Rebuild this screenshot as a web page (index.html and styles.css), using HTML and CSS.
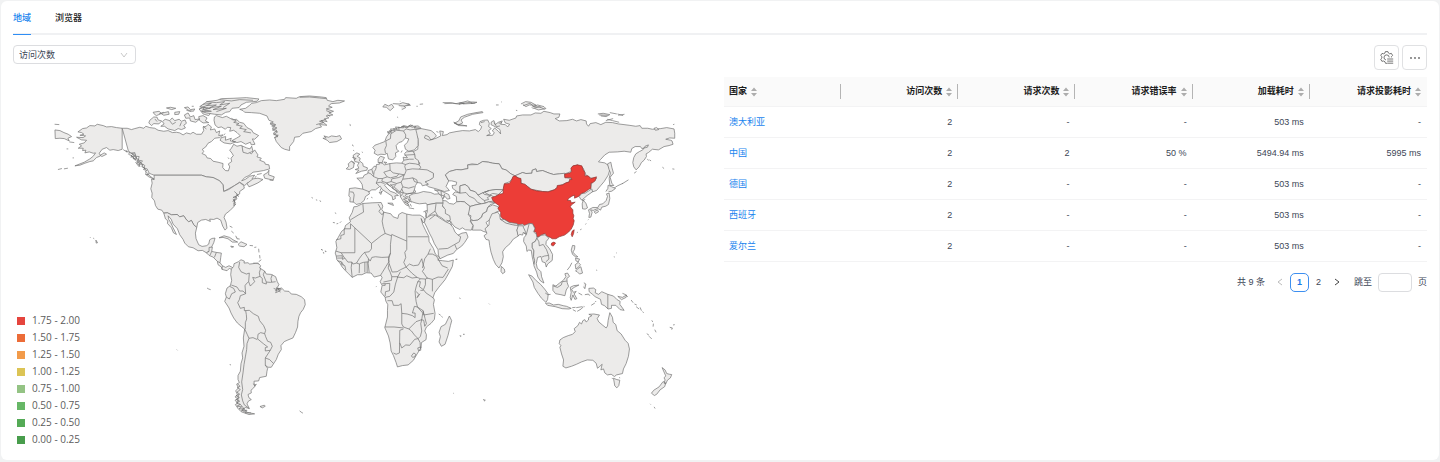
FILE: index.html
```html
<!DOCTYPE html>
<html lang="zh-CN">
<head>
<meta charset="utf-8">
<title>访问统计</title>
<link rel="stylesheet" href="styles.css">
</head>
<body>
<svg class="defs" width="0" height="0" aria-hidden="true">
  <symbol id="sort" viewBox="0 0 6 10"><path d="M3 .4 6 4H0zM3 9.6 6 6H0z" fill="#adadad"/></symbol>
</svg>
<main class="card">
  <nav class="tabs">
    <a class="tab active" href="#region">地域</a>
    <a class="tab" href="#browser">浏览器</a>
  </nav>
  <div class="toolbar">
    <label class="picker">
      <select aria-label="指标"><option>访问次数</option></select>
      <svg viewBox="0 0 8 6"><path d="M1 1l3 4 3-4" fill="none" stroke="#bbb" stroke-width=".8"/></svg>
    </label>
    <div class="actions">
      <button class="icon-btn" aria-label="设置">
        <svg viewBox="0 0 14 14" fill="none" stroke="#666" stroke-width=".9"><path d="M7 12.3H5.5L5 10.8 3.6 10l-1.7.3L.7 8.2 1.9 7V5.6L.7 4.5 2 2.4l1.6.4L5 2 5.4.6h2.5L8.4 2l1.3.8 1.7-.4 1.2 2.1-1.2 1.1v.8M6 9a2.6 2.6 0 1 1 3.2-2.6M7.2 8h6M7.2 10.1h6M7.2 12.2h6"/></svg>
      </button>
      <button class="icon-btn" aria-label="更多">
        <svg viewBox="0 0 14 14" fill="#666"><circle cx="3" cy="7" r=".9"/><circle cx="7" cy="7" r=".9"/><circle cx="11" cy="7" r=".9"/></svg>
      </button>
    </div>
  </div>
  <div class="content">
    <section class="map">
      <svg class="world" viewBox="13 77 704 374" role="img" aria-label="世界地图">
        <!-- North America -->
        <g transform="translate(40 85) scale(.33333)">
          <path d="M247 130 230 128 215 125 200 126 190 122 172 118 165 123 150 122 140 129 128 131 114 141 125 143 132 148 120 151 137 153 130 158 110 157 125 165 140 166 133 174 118 178 125 183 115 190 130 190 128 197 138 196 135 204 148 201 160 205 167 204 160 214 150 222 133 232 105 243 120 241 135 235 150 230 160 228 170 218 182 213 178 205 187 193 200 188 210 196 220 194 235 197 247 193z"/>
          <path d="M247 130 262 130 275 134 285 131 300 127 312 130 318 124 330 128 345 130 355 136 372 139 385 137 398 143 410 142 420 144 430 150 440 144 452 147 460 142 470 148 485 148 492 137 490 126 500 124 505 118 515 126 512 135 525 132 530 143 540 138 537 152 550 150 540 158 525 160 515 170 505 175 498 186 488 193 492 200 487 206 498 211 502 219 513 221 520 229 535 232 550 236 549 248 557 257 566 258 570 246 566 237 576 230 574 220 581 212 577 205 570 196 575 190 582 178 592 184 605 181 612 190 610 197 625 200 635 207 645 195 655 210 652 216 665 220 660 226 675 232 677 238 688 240 690 252 672 257 655 260 640 262 628 272 615 278 606 288 618 283 630 274 645 271 637 282 650 288 640 296 625 293 615 302 600 292 585 302 552 320 550 300 540 288 520 278 500 276 485 271H343L335 268 328 265 322 252 312 250 315 242 303 235 308 228 295 226 298 215 287 214 285 203 272 205 265 196z"/>
          <path d="M343 271H485L500 276 520 278 540 288 550 300 552 320 567 314 585 302 600 293 612 302 614 310 600 320 600 327 588 334 592 342 583 348 588 357 582 366 570 378 557 388 553 398 559 412 562 430 556 436 549 424 543 406 532 400 522 404 510 403 512 410 498 404 485 406 474 413 471 428 462 420 455 407 447 411 440 405 432 393 420 396 412 389 395 390 383 384 372 385 366 376 354 373 347 362 344 348 336 338 337 325 333 312 337 295 335 283 343 284z"/>
          <path d="M372 385 383 384 395 390 412 389 420 396 432 393 440 405 447 411 455 407 462 420 471 428 467 445 469 462 477 480 487 485 500 483 507 478 510 465 517 461 526 460 522 474 517 484 514 490 508 500 500 504 488 497 475 498 460 489 446 486 435 475 430 464 420 450 413 432 400 418 394 403 385 393 387 404 394 415 399 427 410 449 401 444 395 429 383 416 384 408 377 402z"/>
          <path d="M500 504 508 500V488L518 487 516 500 530 503 545 505 543 519 541 534 548 543 558 548 568 543 580 549 577 557 570 550 562 558 547 554 545 547 535 540 533 530 520 517 508 512z"/>
          <path class="line" d="M516 500 511 511M530 503 524 518M541 534 533 530M548 543 547 554"/>
          <path d="M343 283 327 276 316 267 326 270zM300 245 291 232 298 233zM292 222 276 206 285 207zM274 210 286 225 280 218zM306 238 294 226M318 256 306 241"/>
          <path class="line" d="M250 194 262 202 258 197 270 203 266 208 276 213 273 217 283 214 280 222 290 219 286 226 296 224 291 230 303 231 299 238 310 239 306 246 316 250 311 254 322 257 316 261 328 268 320 270M287 232 298 246M272 203 289 216M584 320 596 331 580 338 590 336 580 350 586 344 582 358"/>
          <path d="M45 135 60 137 72 143 85 148 95 155 84 160 88 168 73 161 60 160 46 161zM44 118 58 119M88 171 103 173M54 254 66 251M72 252 84 250M186 215 200 208 193 204 181 211zM80 192H85M98 219H102"/>
          <path d="M150 457 152 459M160 460 163 462M168 466 173 474 169 475z"/>
          <path d="M330 106 342 96 352 97 355 105 366 108 357 117 342 116 335 122 327 114zM368 110 376 103 390 107 397 99 405 107 418 103 425 109 436 105 440 115 432 121 437 129 425 134 415 131 405 137 385 132 374 124 363 124 373 117zM340 82 358 79 365 85 386 80 388 88 372 91 364 86 350 92 344 88zM380 69 392 67 408 70 396 74zM405 82 420 80 417 88 405 89zM434 68 445 66 452 74 465 72 461 79 448 77zM456 64 462 64M434 90 445 84 452 96 462 92 466 104 480 102 468 112 452 108 450 99 438 100zM477 95 490 92 502 99 497 108 507 113 490 114 479 106zM478 72 495 67 485 79 500 76 514 83 507 92 490 87zM484 62 502 56 513 60 502 67 522 66 505 73z"/>
          <path d="M480 65 502 50 532 46 545 41 580 40 620 38 658 42 652 49 620 52 604 60 598 68 577 70 570 80 558 82 545 90 525 88 500 84 487 80 515 79 490 73 512 70z"/>
          <path d="M524 96 530 92 548 98 560 94 580 105 590 103 600 112 612 115 622 128 636 135 640 143 657 152 645 163 638 162 646 178 635 180 632 172 618 178 604 170 592 173 577 167 590 160 602 153 592 143 582 136 570 139 573 128 563 127 557 133 545 126 535 128 526 120 523 106zM545 158 558 155 557 166 575 160 572 168 588 171 572 177 553 174 541 166zM607 183 621 189 631 192 636 184 640 199 624 206 610 202zM565 218 568 222M552 151 556 146"/>
          <path class="line" d="M500 50 530 53 555 50 540 60 570 55 550 68M480 70 500 62 530 60 510 68 545 64 520 74 560 70 530 80M490 58 515 55 500 62M540 44 575 48 600 44 640 46M575 100 590 108 582 112 598 116 590 120 608 124 600 130 620 134 612 140 634 144M372 82 358 87M390 108 398 118 408 112M425 112 420 124M440 76 455 80M490 124 500 132M345 102 352 110"/>
          <path d="M672 270 684 263 688 256 687 270 704 276 700 286 688 283 675 280zM640 282 655 280 670 284 655 294 640 301 628 306 622 296zM652 269 666 266M646 279 650 273M580 342 586 352 582 362 589 358M590 328 597 336"/>
          <path d="M538 459 553 453 570 458 580 465 594 472 578 472 565 462 550 458zM595 479 604 471 622 479 613 486 600 484zM573 484 582 486 576 488zM630 482 640 483M570 424 578 428M575 439 582 445M588 453 592 462 600 463M644 488 650 487M657 492 658 503M660 511 661 521M657 531 665 525"/>
        </g>
        <!-- Greenland and Iceland -->
        <g transform="translate(160 80) scale(.33333)">
          <path d="M240 88 258 85 270 76 276 70 290 68 305 62 330 60 350 62 375 58 378 53 410 55 420 50 450 48 485 51 500 53 503 61 520 65 535 61 555 63 540 69 515 71 507 78 518 82 500 87 522 94 508 99 520 105 500 108 508 114 494 117 503 125 485 122 502 136 480 134 486 141 468 146 455 155 430 160 420 170 405 172 402 185 390 200 390 212 375 208 365 203 350 185 345 172 355 170 341 160 352 152 338 145 347 137 331 132 341 126 328 121 322 108 300 100 275 98 255 97 250 92z"/>
          <path class="line" d="M332 128 348 134 336 138 352 144 338 150 354 156 342 164 356 166 344 174M470 134 492 128 480 124 500 118M420 52 450 51 480 54 500 56M500 92 515 98M504 104 512 110"/>
          <path d="M490 175 500 174 493 168 507 172 516 168 530 170 541 167 546 177 532 185 510 188 503 181zM570 135 573 137M579 196 581 198"/>
        </g>
        <!-- South America -->
        <g transform="translate(150 180) scale(.33333)">
          <path d="M245 268 252 260 253 252 266 246 274 240 284 244 283 250 295 249 300 253 325 250 333 258 330 265 345 274 350 283 365 284 378 291 383 306 388 315 380 328 396 325 405 334 418 335 425 343 440 344 455 351 465 360 467 375 461 389 453 399 448 410 445 425 444 442 438 458 430 475 415 481 404 486 394 498 395 510 386 524 380 540 372 552 365 563 355 563 347 557 354 566 352 575 350 590 330 594 327 604 313 605 314 617 320 614 312 625 304 632 305 640 295 645 298 655 305 660 296 665 292 673 299 687 288 684 277 690 282 696 300 700 315 703 298 705 275 697 265 687 257 675 264 671 256 662 264 658 256 652 263 645 258 634 266 625 261 614 269 609 265 600 265 588 272 575 274 552 279 535 277 520 283 500 281 475 285 448 276 441 263 430 252 415 244 400 238 385 225 365 230 352 227 342 232 325 242 318 246 302 243 285z"/>
          <path class="line" d="M270 247 267 263 274 276 290 283 299 280 297 306 290 312 286 318 288 342 280 334 270 334 262 322 245 316M333 266 329 279 331 290 317 295 309 293 315 306 302 319 297 306M345 274 341 285 350 307 362 308 378 306M368 285 364 296 366 307M331 290 338 296 338 309 350 313 350 307M288 342 272 348 269 360 264 369 272 386 284 383V393L299 392 311 402 326 410 330 423 342 438 348 452 345 462 348 471 354 485 363 488 368 500 362 512 347 514 347 504 354 502 341 492 324 478 325 464 333 459 345 462M285 448 293 465 298 476 310 474 323 480M298 476 292 492 291 510 287 532 283 555 280 580 276 607 279 630 275 646 279 664 284 676 299 687M362 512 347 535 347 557M347 535 360 540 372 552M230 352 239 358 246 342 257 337 252 326 240 320M288 393 290 405 291 418 287 429 287 448M372 326 382 330 378 339 390 334 395 328 384 325 392 338"/>
          <path class="line" d="M263 612 271 620 263 624 272 630 262 638 270 644 259 648 269 654 260 660 270 665 260 670 271 675 262 680 276 682 268 688 284 688 275 694 292 692 286 700 304 700M266 646 264 672M270 672 290 696M311 612 316 620M380 324 390 330 376 332"/>
          <path d="M331 681 344 677 347 680 338 685zM450 694 455 698 460 701M172 325 177 328 183 330M81 510 83 512M240 555 244 556M486 53 490 55M499 60 503 61M511 62 513 64M515 209 519 211M520 218 523 220M528 213 530 216M311 250 323 251 326 254M360 1 372 1"/>
        </g>
        <!-- Russia and northern Asia -->
        <g transform="translate(400 90) scale(.33333)">
          <path d="M48 118 65 116 80 119 95 122 105 130 111 138 102 147 90 151 75 144 78 136 88 140 94 150 110 145 124 138 121 123 132 125 129 137 143 134 150 129 170 125 190 122 210 123 228 119 237 125 244 118 247 110 240 104 242 95 253 91 265 90 270 100 268 110 276 116 268 122 273 132 262 137 280 136 285 128 279 123 286 114 298 125 304 132 302 119 287 110 275 104 276 96 284 92 288 104 297 97 309 93 304 103 318 104 325 111 331 103 318 99 313 88 330 91 350 84 352 78 370 75 395 75 408 69 425 70 434 64 453 68 464 72 482 72 479 82 468 86 480 93 503 92 520 88 532 93 545 89 561 93 562 102 568 109 573 101 590 98 605 104 620 97 640 98 658 102 690 106 710 109 723 107 728 115 746 115 760 118 785 116 803 113 825 117 827 130V145L812 144 800 148 815 151 819 153 822 163 810 167 795 170 778 180 760 178 748 188 741 192 742 200 735 211 727 218 720 231 711 240 704 231 701 218 704 203 710 192 721 185 731 180 738 169 748 165 745 172 728 176 724 170 708 170 698 176 695 187 675 184 655 186 630 187 617 195 604 209 598 216 617 219 628 227 632 240 627 256 615 275 604 288 592 302 580 306 574 296 577 281 592 265 575 265 560 255 552 235 535 225 520 230 515 245 497 252 480 252 463 254 450 250 430 242 412 245 410 237 399 241 398 250 380 251 370 248 347 258 335 252 320 240 308 237 300 222 280 220 268 217 250 215 235 224 218 222 205 225 206 236 185 240 172 239 150 245 138 255 148 273 140 290 150 302 135 305 110 297 88 291 75 281 82 271 98 266 102 252 88 244 60 240 55 225 62 220 55 215 45 205 46 198 42 185 55 178 56 160 55 145 47 130z"/>
          <path d="M165 100 178 93 184 81 205 73 230 68 249 65 251 68 220 73 195 82 185 90 190 99 177 105zM163 97 174 103 203 108 178 107zM130 38 155 38 170 41 185 38 195 40 180 42 220 36 233 37 215 41M178 40 205 33 219 38M365 42 379 35 395 37 411 46 390 45 380 50 371 44M397 52 415 45 434 50 440 56 417 60 405 55M596 72 612 70 632 74 621 80 605 78M632 68 653 72M620 92 642 86M657 76 676 73M822 104 826 103M0 43 13 44 28 42 33 46 13 48 19 53 7 59M51 49H55M61 43 71 42M1 34 3 34M111 125 117 127M290 45 298 45M306 36 308 36M350 61 354 62M625 222 635 217 638 232 643 250 633 262 638 280 644 287 632 287 630 265 634 249 630 240zM765 115 773 113 779 119 769 121zM790 232 795 236M751 210 756 213M820 237 826 238M745 207 748 212M640 298 655 288 672 280 688 270M669 283 671 280M712 245 705 250"/>
          <path class="line" d="M135 41 160 40 182 43M190 42 228 40M372 47 392 40 404 50 425 52M400 56 420 50 436 58M600 75 625 76M655 72 672 77M624 88 640 92 660 97M245 98 256 95M284 98 292 110 302 108M298 100 308 98"/>
          <path d="M148 273 138 255 150 245 172 239 185 240 206 236 205 225 235 224 250 215 268 217 280 220 300 222 308 237 320 240 335 252 347 258 337 269 330 276 316 281 312 300 290 299 270 302 250 309 236 316 228 306 212 301 207 291 197 284 182 288 182 310 170 303 160 296 158 287 170 286 172 277 157 273z"/>
          <path d="M182 288 197 284 207 291 212 301 228 306 236 316 250 309 270 302 290 299 312 300 295 316 282 326 289 338 282 334 268 336 258 340 246 342 230 345 212 350 195 336 184 335 172 336 171 320 160 314 167 306 182 310z"/>
          <path class="line" d="M182 310 200 308 209 319 225 326 235 338 246 342M236 316 246 326 255 332 268 329 264 323 276 317 256 314 250 309M270 302 256 307 270 316 280 311 295 313M255 332 258 340M276 317 285 322"/>
          <path d="M128 332 140 333 150 341 163 343 172 336 184 335 195 336 212 350 211 366 207 374 215 385 213 395 221 407 216 421 198 420 189 414 181 419 167 412 158 402 153 393 143 389 139 374 130 365 133 353 125 343z"/>
          <path d="M212 350 230 345 246 342 258 340 268 336 288 339 272 345 265 353 262 365 250 372 247 382 235 391 222 393 213 386 215 378 207 374z"/>
          <path d="M213 393 235 391 247 382 250 372 262 365 265 353 280 345 295 350 303 362 288 368 278 380 270 391 260 398 268 412 272 420 263 428 252 425 245 421 219 421 222 407z"/>
          <path d="M347 258 370 248 380 251 398 250 399 241 410 237 412 245 430 242 450 250 463 254 480 252 497 250V262L510 265 520 268 510 276 480 288 465 300 445 306 430 305 395 298 385 290 365 280V270z"/>
          <path d="M540 320 548 311 558 310 578 297 580 306 564 317 557 323 550 329 560 340 565 354 558 358 550 357 549 342 552 332 545 329zM550 332 558 329M568 360 581 353 596 353 601 344 611 342 621 332 625 320 622 312 630 310 632 326 628 344 620 349 608 352 604 361 596 356 582 362 574 360 579 367 575 382 569 383 571 371zM585 366 595 360 598 366 589 371zM620 305 626 296 627 286 636 290 649 296 638 304 628 306M568 389 566 391M561 401 559 404M547 418 543 420M536 427 533 429"/>
          <path class="hot" d="M347 258 357 264 365 266 365 280 377 283 385 290 395 298 412 303 430 305 447 306 465 300 473 294 474 287 490 285 500 279 510 276 511 269 518 269 515 263 497 264 496 253 513 249 517 245 515 235 521 228 535 225 548 228 552 239 557 248 557 258 567 258 575 266 592 261 588 273 580 279 575 280V295L568 299 557 307 546 311 538 320 526 325 526 316 518 319 508 326 505 332 514 332 516 339 528 337 517 345 513 351 521 360 521 370 524 378 522 386 525 393 522 406 516 418 508 427 496 436 480 441 470 447 459 447 453 443 442 439 438 431 424 436 425 444 412 440 411 428 403 424 407 414 400 403 388 407 375 408 350 403 340 405 325 395 312 388 304 380 304 368 296 356 300 348 289 340 281 333 277 323 289 319 300 313 311 311 312 296 315 282 330 281 336 272 341 260z"/>
          <path class="hot" d="M519 424 525 420 523 432 519 441 516 434zM457 460 464 457 469 460 462 469 456 466z"/>
        </g>
        <!-- Europe -->
        <g transform="translate(320 90) scale(.33333)">
          <path d="M160 173 166 166 180 161 196 155 201 141 210 129 203 126 217 124 213 117 232 118 228 111 244 113 253 107 265 110 273 105 283 109 296 108 305 115 289 118 292 130 296 148 296 167 285 180 268 184 258 178 255 166 264 157 268 147 258 144 248 155 238 158 230 167 232 178 238 184 228 189 229 200 220 210 207 207 203 190 196 194 184 193 175 196 164 190 167 181z"/>
          <path class="line" d="M198 190 196 178 201 167 199 153 213 146 214 132 231 121 252 123 260 117 272 120 289 118M252 123 259 135 258 144M245 188 248 182M205 130 216 128 210 122 226 122 222 116 240 118 236 112 252 114 250 108 262 114 270 107 278 112 290 110 284 114 300 114M245 110 265 112 280 106"/>
          <path d="M101 196 112 189 121 193 113 199 122 205 120 213 130 221 131 229 144 234 142 241 126 244 109 251 118 241 107 239 118 235 114 226 119 218 106 215zM86 222 95 214 104 218 102 233 90 239 80 237 88 229zM101 181 104 183M127 186 130 188M98 165 102 168M98 202 110 206 104 210M96 214 106 222"/>
          <path d="M176 208 183 199 195 203 190 212 188 219 176 218zM193 216 202 218 197 221z"/>
          <path d="M90 296 107 294 130 298 128 284 121 273 112 265 130 264 134 256 145 251 146 242 157 238 164 229 170 230 171 224 180 223 179 218 188 220 195 225 212 221 231 219 247 220 253 211 251 202 264 204 255 192 260 186 281 184 286 194 287 205 297 212 299 225 304 232 300 238 323 240 342 250 342 263 330 271 317 276 327 283 309 288 305 280 294 278 288 287 285 299 289 307 280 310 265 312 257 316 266 326 271 336 264 340 270 350 258 344 251 334 243 321 242 310 224 299 212 289 200 281 195 286 204 296 212 304 226 309 237 317 226 318 228 326 220 330 218 319 203 309 188 299 182 289 168 300 157 300 148 306 150 312 138 320 134 332 123 341 110 344 103 337 91 336 92 323 88 318z"/>
          <path class="line" d="M92 306 101 307 104 315 101 337M130 298 150 306M145 248 154 252 162 260 176 266 170 280 179 288M157 238 161 253M171 230 168 240 164 245 162 260M170 280 182 277 195 281M176 266 189 266 203 261 193 247 212 241 211 221M212 241 221 249 238 252 255 255 260 243 256 230 258 224 247 220M258 224 270 220 289 222 299 225M261 240 279 237 300 238M253 211 270 208 283 208M255 196 269 195 286 194M203 261 213 264 233 259 238 252M189 266 187 274 202 279 215 275 217 267 238 263 254 255 250 268 245 277 231 281 215 275M202 279 212 289M250 268 268 266 280 264 285 275 294 278M280 264 292 270 294 278M245 277 250 291 268 295 285 290M231 281 224 291 231 298 242 307 247 297 250 291M212 286 226 284M247 297 252 309 264 312 281 309 285 299M242 307 252 309 243 320"/>
          <path class="line" d="M213 284 222 292 218 294 232 303 230 306 240 312M250 318 262 326 252 328 266 336 255 336 268 344M262 318 274 326 268 330 276 338M272 342 276 350"/>
          <path d="M188 303 184 314 179 307 186 307zM205 340 219 340 222 347zM268 354 284 357M155 322 159 324M146 325 142 328M184 296 182 303M287 313 282 325M312 366 322 362 318 368M190 51 196 43 207 48 217 43 223 52 212 62 201 52zM220 41 240 42 250 38 270 43 256 48 238 47M233 81 236 83M91 103 94 106"/>
          <path d="M269 318 281 312 296 310 312 305 334 308 345 313 358 312 365 316 370 328 371 340 350 340 335 343 323 345 320 340 300 342 290 340 275 335z"/>
          <path d="M345 300 365 303 375 308 388 314 392 326 384 328 376 319 365 316 358 312 355 305z"/>
          <path d="M323 345 350 340 371 340 369 349 378 359 378 371 391 378 393 390 383 398 368 385 352 376 340 382 324 390 318 380 324 365z"/>
          <path class="line" d="M365 303 366 316M376 312 371 326M350 341 347 364 327 378M347 364 354 376M324 390 318 367M370 328 376 320"/>
        </g>
        <!-- Africa and Arabia -->
        <g transform="translate(320 190) scale(.33333)">
          <path d="M103 51 112 50 130 41 158 39 185 38 190 49 187 59 193 67 214 72 221 81 235 86 238 74 248 68 262 73 279 76 302 76 313 83 318 94 311 99 305 86 310 104 319 123 328 140 329 155 342 176 348 193 361 204 355 211 370 213 387 215 402 211 399 230 389 249 377 270 358 293 346 309 341 323 345 331 342 344 347 371 345 389 335 401 321 412 316 424 321 435 320 450 306 459 305 474 293 493 282 512 266 526 249 528 234 532 230 519 222 498 215 484 212 460 207 439 196 414 204 382 204 362 205 345 199 334 197 323 184 307 188 287 182 276 188 264 184 257 164 262 155 250 140 249 127 255 114 255 98 263 87 252 77 242 68 232 61 220 52 210 50 199 47 190 52 174 49 155 56 143 66 125 75 118 78 107 93 96 89 84 98 68z"/>
          <path class="line" d="M130 41 132 67 116 76 93 90M93 102V117H74V134L64 137V147L50 150M93 102 156 161 185 138 197 131 191 110 188 94 193 67M106 115V189H65L49 184M176 43 184 57 178 65 188 75 193 67M197 131 216 138 217 134 262 154V73M265 141H327M262 154V179L256 188 259 203 253 218 260 232 243 240 233 246 218 247 214 235 209 222 207 211 213 190 213 164 216 138M156 161V177L149 186 135 188 127 196 119 207 111 220 100 223 97 217 85 217 76 205 69 209 68 198 50 199M213 190 207 202 187 203 168 201 157 203 152 214 147 207 135 188M65 189 75 205M53 205H68M54 213 65 216 66 224 76 228 79 242M66 216 72 226M97 217 95 234 98 263M111 220 120 223 119 250M136 218 136 248M143 217V248M147 207 146 222 149 248M120 222 131 218 147 216M207 202 209 215 199 231 188 249 183 257M209 222 206 235 212 247 217 261 216 272 192 277M188 282H197V287H189M217 261 235 261 243 246M197 282 211 281 210 303 198 306 197 319M235 261 228 283 223 307 211 320 197 323M204 333 218 333 222 347H238L245 342 247 371 263 373 279 378 287 384V370H279L285 350 294 352 290 335 288 319 287 305 290 292 295 276 303 267 293 263 278 265 262 258 253 264 233 262M260 232 270 223 282 228 297 226 307 207 310 221 315 235 309 245 315 253 323 265 339 269 356 262 371 263 387 238M260 232 277 250 293 263M333 177 326 193 316 207 309 235M326 193 339 193 351 199 357 209 368 228 385 235M303 267 318 268 318 285 312 300 320 310 335 320 341 325M318 268 325 265M303 302H312M295 276H303L300 291 312 300M290 305 298 314 293 324 302 312M339 269V305M294 352 311 363 313 376 343 371M294 352 310 370 307 390 290 396 280 406 268 418M311 363 317 387 321 402 316 410 313 392 305 390M247 371V403L252 412 268 418M196 412H224L252 415M252 418 241 422 240 490 230 494 222 490M241 460 247 475 259 466 271 467 286 449 296 447 285 436 276 424 268 418M307 390 304 402 307 424 303 440 296 447 302 459 303 475M276 499 283 490 289 494 286 502 279 503zM295 475 304 472 304 482 297 483z"/>
          <path d="M318 86 323 83 335 76 347 75 360 84 379 96 392 102 401 113 407 127 416 136 428 130 441 128 446 142 436 158 427 169 411 180 402 191 385 196 362 207 357 196 356 180 345 162 338 145 331 132 322 112 315 98z"/>
          <path class="line" d="M358 178 385 176 406 164 420 156 424 141 416 136M406 164 412 178M347 76 330 89M381 91 392 95 397 107"/>
          <path d="M390 379 397 393 393 408 386 437 377 464 366 470 359 457 363 441 359 428 365 411 378 404zM408 209 413 209M358 373 364 377M366 380 370 383M421 326 423 328M422 440 424 441M432 434 434 435M40 98 46 99M51 102 56 101M61 99 65 95M46 69 50 71M5 179 9 181M11 189 14 190M17 183 18 187M1 34 4 35M169 292 171 290"/>
        </g>
        <!-- South Asia and Oceania -->
        <g transform="translate(450 160) scale(.33333)">
          <path d="M120 180 128 162 145 157 151 165 153 178 170 188 195 195 207 195 220 193 225 197 240 191 250 194 240 205 235 217 231 225 224 220 226 210 211 207 207 200 203 211 208 228 192 238 182 252 168 264 160 276 162 291 158 309 149 325 139 314 132 299 125 277 121 257 119 241 110 239 104 228 113 221 107 207 119 196z"/>
          <path d="M153 178 165 179 180 188 203 191 207 197 190 195 170 190zM207 198 222 198 222 202 226 210 231 222 222 218 220 226 212 224 206 228 203 211z"/>
          <path d="M156 320 165 328 167 337 160 342 155 335z"/>
          <path d="M240 191 250 192 257 207 253 216 262 225 263 235 258 245 249 250 249 263 254 273 253 290 257 302 254 314 249 292 246 272 238 271 233 275 231 259 223 245 224 234 231 225z"/>
          <path d="M263 235 275 227 287 225 299 235 291 245 290 254 301 267 310 284 309 302 295 313 291 322 288 309 279 306 275 290 265 293 261 312 264 325 275 336 277 351 284 370 274 364 266 352 262 337 254 318 256 302 253 290 254 273 249 263 249 250 258 245z"/>
          <path class="line" d="M263 235 269 246 270 258 282 254 292 270 298 287 285 289 278 292M298 287 299 298 290 306"/>
          <path d="M238 345 248 349 261 363 274 374 286 388 297 403 295 420 290 428 277 416 266 401 255 383 251 367zM288 400 296 405 304 404M289 431 300 430 313 436 327 434 342 438 352 440 366 446 359 448 339 447 318 441 295 437zM369 444 379 443M381 444 400 441M384 455 396 448 403 441M371 450 380 455M404 440 406 441"/>
          <path d="M311 375 320 379 331 370 342 362 350 351 347 342 355 340 361 350 353 356 354 369 358 380 351 391 347 408 335 405 319 402 311 392z"/>
          <path class="line" d="M312 379 325 383 336 376 339 366 353 364"/>
          <path d="M363 383 373 378 389 376 375 383 367 389 373 398 381 395 375 403 383 417 377 419 371 406 366 422 363 414 366 398zM404 369 410 373 407 387 403 381M388 400 399 406M407 405 418 403 422 408M426 437 437 430M438 427 441 424"/>
          <path d="M419 386 433 385 440 390 438 399 448 404 458 396 467 400 476 404 493 409 504 420 513 425 512 434 525 452 513 450 500 437 487 437 487 446 477 448 466 438 457 434 454 419 438 411 430 404 420 396zM506 410 520 413 532 406 531 413 517 420zM520 401 530 405 536 412M546 421 552 429M556 433 563 436M561 441 570 448M573 443 577 453M580 456 584 459"/>
          <path class="line" d="M476 404V448"/>
          <path d="M370 257 377 258 376 269 371 277 381 288 386 291 380 292 370 284 366 271zM379 295 391 298 387 307 380 303zM378 315 387 308 394 315 386 324 380 328zM379 334 387 326 395 321 400 340 391 343 384 336zM354 331 362 321 368 309"/>
          <path d="M332 541 342 534 357 528 370 524 378 516 375 507 386 498 391 488 397 493 401 483 407 480 411 487 418 481 418 474 428 468 419 464 434 463 451 466 444 477 449 487 461 497 471 505 475 499 477 482 482 459 490 473 492 488 500 495 504 513 516 523 528 542 537 551 541 568 538 590 531 612 523 628 520 642 502 646 496 651 486 644 475 646 467 640 463 628 455 631 459 614 450 622 445 626 441 611 431 602 414 601 397 607 382 614 367 620 350 625 341 620 343 601 337 583 332 563 335 558 330 552z"/>
          <path d="M493 656 503 660 512 662 509 678 503 685 497 679zM489 655 490 658M510 654 513 655M639 624 648 631 653 642 661 644 668 645 664 655 655 662 650 673 645 671 648 661 645 655 650 649zM642 666 650 670 647 681 633 691 623 704 616 708 607 701 614 692 630 682zM593 522 600 527M600 530 608 538M608 482 611 487M613 492 612 501M617 510 621 518M662 503 670 505 668 510M672 496 677 495M603 733 605 735M615 742 618 747M101 720 108 722 104 725M12 701 14 702M31 528 36 529M42 524 46 524M119 432 121 434M31 414 33 416M21 298 24 298M494 291 497 292M441 331 444 332M501 279 503 280"/>
        </g>
      </svg>
      <ul class="legend">
        <li class="c1">1.75 - 2.00</li>
        <li class="c2">1.50 - 1.75</li>
        <li class="c3">1.25 - 1.50</li>
        <li class="c4">1.00 - 1.25</li>
        <li class="c5">0.75 - 1.00</li>
        <li class="c6">0.50 - 0.75</li>
        <li class="c7">0.25 - 0.50</li>
        <li class="c8">0.00 - 0.25</li>
      </ul>
    </section>
    <section class="data">
      <table>
        <thead>
          <tr>
            <th>国家<svg><use href="#sort"/></svg></th>
            <th>访问次数<svg><use href="#sort"/></svg></th>
            <th>请求次数<svg><use href="#sort"/></svg></th>
            <th>请求错误率<svg><use href="#sort"/></svg></th>
            <th>加载耗时<svg><use href="#sort"/></svg></th>
            <th>请求投影耗时<svg><use href="#sort"/></svg></th>
          </tr>
        </thead>
        <tbody>
          <tr><td><a href="#au">澳大利亚</a></td><td>2</td><td>-</td><td>-</td><td>503 ms</td><td>-</td></tr>
          <tr><td><a href="#cn">中国</a></td><td>2</td><td>2</td><td>50 %</td><td>5494.94 ms</td><td>5995 ms</td></tr>
          <tr><td><a href="#de">德国</a></td><td>2</td><td>-</td><td>-</td><td>503 ms</td><td>-</td></tr>
          <tr><td><a href="#es">西班牙</a></td><td>2</td><td>-</td><td>-</td><td>503 ms</td><td>-</td></tr>
          <tr><td><a href="#ie">爱尔兰</a></td><td>2</td><td>-</td><td>-</td><td>503 ms</td><td>-</td></tr>
        </tbody>
      </table>
      <div class="pager">
        <span class="total">共 9 条</span>
        <button class="page" aria-label="上一页" disabled><svg viewBox="0 0 6 8"><path d="M5 1 1 4l4 3" fill="none" stroke="#bbb"/></svg></button>
        <button class="page current">1</button>
        <button class="page">2</button>
        <button class="page" aria-label="下一页"><svg viewBox="0 0 6 8"><path d="M1 1l4 3-4 3" fill="none" stroke="#444"/></svg></button>
        <label class="jump">跳至<input type="text">页</label>
      </div>
    </section>
  </div>
</main>
</body>
</html>
```
FILE: styles.css
```css
* {
  box-sizing: border-box;
}

body {
  margin: 0;
  padding: 1px 1px 0;
  background: #f1f2f3;
  color: #3c4656;
  font: 9px/14px "Liberation Sans", "Noto Sans CJK SC", sans-serif;
}

button,
input,
select {
  font: inherit;
  color: inherit;
}

a {
  color: #1a84ee;
  text-decoration: none;
}

.defs {
  display: block;
}

.card {
  padding: 0 12px 10px;
  border-radius: 6px;
  background: #fff;
}

.tabs {
  display: flex;
  gap: 24px;
  height: 34px;
  border-bottom: 2px solid #f0f1f3;
}

.tab {
  height: 34px;
  padding-top: 10px;
  color: #222;
  font-weight: 500;
}

.tab.active {
  border-bottom: 1px solid #2f8ef5;
  color: #1a84ee;
}

.toolbar {
  display: flex;
  align-items: flex-start;
  justify-content: space-between;
  padding-top: 10px;
}

.picker {
  position: relative;
  width: 123px;
}

.picker select {
  display: block;
  width: 100%;
  height: 19px;
  padding: 0 5px;
  border: 1px solid #dcdde0;
  border-radius: 4px;
  background: #fff;
  appearance: none;
}

.picker svg {
  position: absolute;
  top: 7px;
  right: 8px;
  width: 8px;
  height: 6px;
  pointer-events: none;
}

.actions {
  display: flex;
  gap: 3px;
}

.icon-btn {
  display: grid;
  place-items: center;
  width: 25px;
  height: 25px;
  padding: 0;
  border: 1px solid #e0e1e3;
  border-radius: 4px;
  background: #fff;
}

.icon-btn svg {
  width: 14px;
  height: 14px;
}

.content {
  display: grid;
  grid-template-columns: minmax(0, 1fr) minmax(0, 1fr);
  gap: 8px;
  padding-top: 7px;
}

.map {
  position: relative;
}

.world {
  display: block;
  width: 100%;
}

.world path {
  fill: #ecebea;
  stroke: #6c6c6c;
  stroke-width: 2;
  stroke-linejoin: round;
}

.world path.hot {
  fill: #ec3d37;
  stroke: #8b3431;
}

.world path.line {
  fill: none;
}

.legend {
  position: absolute;
  bottom: 2px;
  left: 4px;
  margin: 0;
  padding: 0;
  color: #5c5c5c;
  font: 10px/17px "Open Sans", "Noto Sans", sans-serif;
  list-style: none;
}

.legend li {
  display: flex;
  align-items: center;
  gap: 7px;
}

.legend li::before {
  width: 8px;
  height: 8px;
  background: currentColor;
  content: "";
}

.c1::before { color: #e5453d; }
.c2::before { color: #ec6c38; }
.c3::before { color: #f29b4a; }
.c4::before { color: #dcc455; }
.c5::before { color: #94c384; }
.c6::before { color: #67b766; }
.c7::before { color: #54aa56; }
.c8::before { color: #489d4c; }

table {
  width: 100%;
  border-collapse: collapse;
  table-layout: fixed;
}

th,
td {
  height: 31px;
  padding: 0 6px 0 5px;
  border-bottom: 1px solid #f3f3f4;
  text-align: right;
}

th {
  height: 29px;
  background: linear-gradient(#b4b4b4, #b4b4b4) right center / 1px 15px no-repeat #fafafa;
  color: #1d1d1d;
  font-weight: 700;
  white-space: nowrap;
}

th:last-child {
  background: #fafafa;
}

th:first-child,
td:first-child {
  text-align: left;
}

th svg {
  width: 6px;
  height: 10px;
  margin-left: 4px;
  vertical-align: middle;
}

.pager {
  display: flex;
  align-items: center;
  justify-content: flex-end;
  padding-top: 11px;
}

.total {
  margin-right: 6px;
}

.page {
  display: grid;
  place-items: center;
  width: 19px;
  height: 19px;
  padding: 0;
  border: 0;
  background: none;
}

.page.current {
  border: 1px solid #3d8ff0;
  border-radius: 5px;
  color: #1a78e6;
  font-weight: 700;
}

.page svg {
  width: 6px;
  height: 8px;
}

.jump {
  display: flex;
  align-items: center;
  gap: 6px;
  margin-left: 7px;
}

.jump input {
  width: 34px;
  height: 19px;
  border: 1px solid #dcdde0;
  border-radius: 4px;
}
```
